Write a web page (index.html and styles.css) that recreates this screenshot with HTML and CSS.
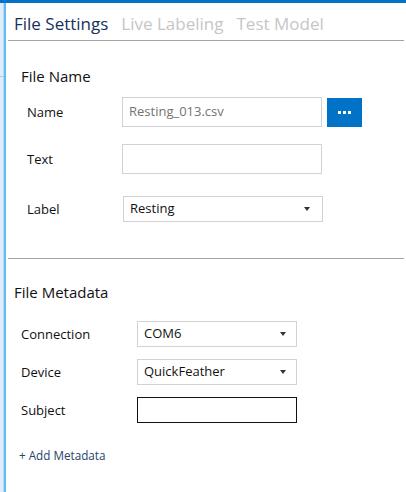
FILE: index.html
```html
<!DOCTYPE html>
<html lang="en">
<head>
<meta charset="utf-8">
<title>File Settings</title>
<link rel="stylesheet" href="styles.css">
</head>
<body>
<div class="topbar"></div>
<div class="frame">
  <div class="rail"><span class="rail-tick"></span></div>
  <main class="content">
    <nav class="tabs">
      <span class="tab active">File Settings</span>
      <span class="tab">Live Labeling</span>
      <span class="tab">Test Model</span>
    </nav>

    <section class="file-name">
      <h2 class="section-title">File Name</h2>
      <div class="row row-name">
        <span class="label">Name</span>
        <div class="input input-tall muted">Resting_013.csv</div>
        <button class="browse" type="button" aria-label="Browse">
          <svg width="13" height="3" viewBox="0 0 13 3"><rect x="0" y="0" width="3" height="3" fill="#fff"/><rect x="5" y="0" width="3" height="3" fill="#fff"/><rect x="10" y="0" width="3" height="3" fill="#fff"/></svg>
        </button>
      </div>
      <div class="row row-text">
        <span class="label">Text</span>
        <div class="input input-tall"></div>
      </div>
      <div class="row row-label">
        <span class="label">Label</span>
        <div class="select select-wide">Resting<span class="caret"></span></div>
      </div>
    </section>

    <hr class="divider">

    <section class="metadata">
      <h2 class="section-title">File Metadata</h2>
      <div class="meta-row">
        <span class="meta-label">Connection</span>
        <div class="select">COM6<span class="caret"></span></div>
      </div>
      <div class="meta-row">
        <span class="meta-label">Device</span>
        <div class="select">QuickFeather<span class="caret"></span></div>
      </div>
      <div class="meta-row">
        <span class="meta-label">Subject</span>
        <div class="input input-dark"></div>
      </div>
      <a class="add-meta" href="#">+ Add Metadata</a>
    </section>
  </main>
</div>
</body>
</html>
```

FILE: styles.css
```css
html, body {
  margin: 0;
  padding: 0;
  background: #ffffff;
}

body {
  width: 406px;
  height: 492px;
  overflow: hidden;
  font-family: "Open Sans", "Noto Sans", sans-serif;
  color: #111111;
}

.topbar {
  height: 3px;
  background: #0173c7;
}

.frame {
  display: flex;
  height: 489px;
}

.rail {
  position: relative;
  width: 6px;
  flex: none;
  background: linear-gradient(to right, #e0ecf7 0 3px, #b4daf4 3px 4px, #5fbdf4 4px 6px);
}

.rail-tick {
  position: absolute;
  left: 0;
  top: 73px;
  width: 4px;
  height: 1px;
  background: #9fd0f2;
}

.content {
  flex: 1;
  padding: 0 2px 0 2px;
}

/* Tabs */
.tabs {
  display: flex;
  gap: 13px;
  padding: 9px 0 4px 6px;
  border-bottom: 1px solid #a3a3a3;
}

.tab {
  font-size: 17px;
  line-height: 24px;
  color: #c6c6c6;
  white-space: nowrap;
}

.tab.active {
  color: #16325a;
}

/* Section titles */
.section-title {
  margin: 0;
  font-weight: normal;
  font-size: 15px;
  line-height: 20px;
  color: #111111;
}

.file-name {
  padding-left: 13px;
}

.file-name .section-title {
  margin-top: 25px;
}

.row {
  display: flex;
  align-items: center;
  padding-left: 6px;
}

.label {
  width: 95px;
  flex: none;
  font-size: 13px;
  color: #111111;
}

.row-name {
  margin-top: 11px;
}

.row-text {
  margin-top: 17px;
}

.row-label {
  margin-top: 22px;
}

.input {
  box-sizing: border-box;
  width: 200px;
  height: 26px;
  border: 1px solid #d2d2d2;
  background: #ffffff;
  font-size: 13px;
  line-height: 26px;
  padding-left: 6px;
}

.input-tall {
  height: 30px;
  line-height: 27px;
}

.muted {
  color: #737373;
}

.browse {
  box-sizing: border-box;
  width: 35px;
  height: 29px;
  margin-left: 5px;
  border: none;
  padding: 0;
  background: #0173c7;
  display: flex;
  align-items: center;
  justify-content: center;
}

.select {
  position: relative;
  box-sizing: border-box;
  width: 160px;
  height: 26px;
  border: 1px solid #d2d2d2;
  background: #ffffff;
  font-size: 13px;
  line-height: 23px;
  padding-left: 6px;
  color: #111111;
}

.select-wide {
  width: 200px;
  margin-left: 1px;
}

.caret {
  position: absolute;
  right: 10px;
  top: 10px;
  width: 0;
  height: 0;
  border-left: 3px solid transparent;
  border-right: 3px solid transparent;
  border-top: 4px solid #333333;
}

.select-wide .caret {
  right: 12px;
}

.divider {
  margin: 36px 0 0 0;
  border: none;
  border-top: 1px solid #a3a3a3;
  height: 0;
}

/* Metadata */
.metadata {
  padding-left: 6px;
}

.metadata .section-title {
  margin-top: 23px;
}

.meta-row {
  display: flex;
  align-items: center;
  padding-left: 7px;
  margin-top: 12px;
}

.metadata .section-title + .meta-row {
  margin-top: 19px;
}

.meta-label {
  width: 116px;
  flex: none;
  font-size: 13px;
  color: #111111;
}

.input-dark {
  width: 160px;
  border-color: #111111;
}

.add-meta {
  display: inline-block;
  margin: 24px 0 0 5px;
  font-size: 11.7px;
  line-height: 16px;
  color: #24456f;
  text-decoration: none;
}
```
